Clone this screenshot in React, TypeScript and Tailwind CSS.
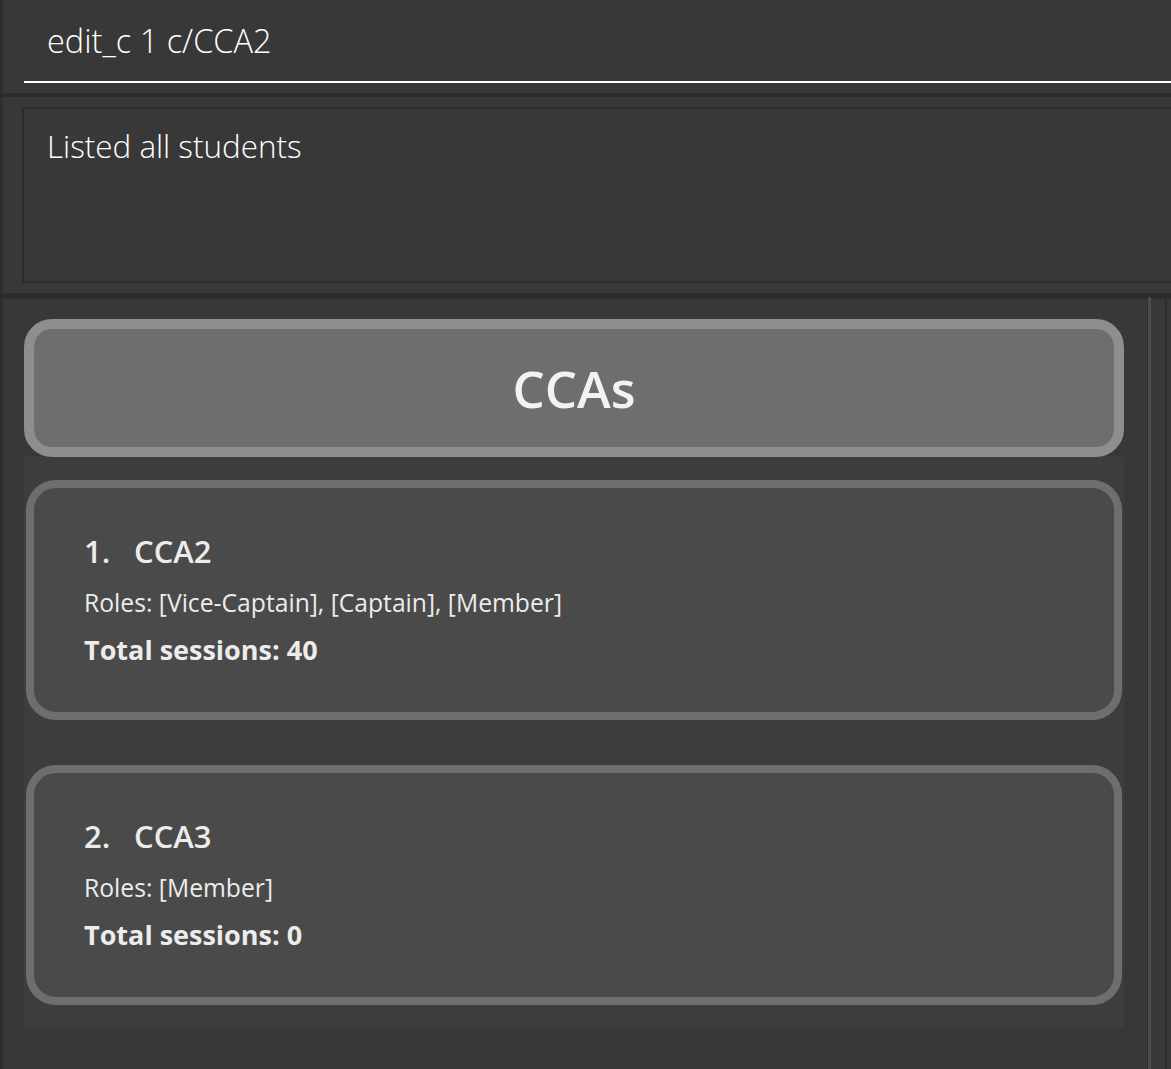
import React from "react";

const font = { fontFamily: '"Open Sans", "Noto Sans", sans-serif' };

function Card({ idx, name, roles, sessions }: { idx: number; name: string; roles: string; sessions: number }) {
  return (
    <div className="mx-[2px] h-[240px] rounded-[30px] border-[8px] border-[#6e6e6e] bg-[#4a4a4a] pl-[50px] pt-[43px] text-[#ececec]">
      <div className="flex items-baseline text-[31px] font-semibold leading-[40px]">
        <span className="w-[50px]">{idx}.</span>
        <span>{name}</span>
      </div>
      <div className="mt-[15px] text-[24.7px] leading-[34px]">{roles}</div>
      <div className="mt-[10px] text-[27px] font-bold leading-[40px]">Total sessions: {sessions}</div>
    </div>
  );
}

export default function App() {
  return (
    <div className="flex h-[1069px] w-[1171px] flex-col overflow-hidden bg-[#383838]" style={font}>
      {/* command box */}
      <div className="h-[93px] shrink-0 border-l-[3px] border-[#2e2e2e] bg-[#383838] pl-[21px]">
        <div className="h-[83px] border-b-2 border-white pl-[23px] pt-[19px] text-[32.5px] font-light leading-[44px] text-white">
          edit_c 1 c/CCA2
        </div>
      </div>
      <div className="h-[4px] shrink-0 bg-[#2c2c2c]" />
      {/* result display */}
      <div className="h-[196px] shrink-0 border-l-[3px] border-[#2e2e2e] bg-[#383838] pb-[10px] pl-[19px] pt-[10px]">
        <div className="h-full border-2 border-r-0 border-[#2c2c2c] bg-[#383838] pl-[23px] pt-[15px] text-[31.4px] font-light leading-[44px] text-white">
          Listed all students
        </div>
      </div>
      <div className="h-[4px] shrink-0 bg-[#2c2c2c]" />
      {/* main panels */}
      <div className="flex min-h-0 flex-1 border-l-[3px] border-[#2e2e2e]">
        <div className="w-[1145px] shrink-0 border-r border-t-2 border-[#2e2e2e] bg-[#383838] pl-[21px] pt-[20px]">
          <div className="flex w-[1100px] flex-col">
            <div className="flex h-[138px] items-center justify-center rounded-[28px] border-[10px] border-[#8e8e8e] bg-[#6e6e6e]">
              <span className="text-[51px] font-semibold leading-none text-[#f2f2f2]">CCAs</span>
            </div>
            <div className="flex h-[571px] flex-col gap-[45px] bg-[#3c3d3f] pt-[23px]">
              <Card idx={1} name="CCA2" roles="Roles: [Vice-Captain], [Captain], [Member]" sessions={40} />
              <Card idx={2} name="CCA3" roles="Roles: [Member]" sessions={0} />
            </div>
          </div>
        </div>
        <div className="w-[3px] shrink-0 bg-[#4e4e4e]" />
        <div className="w-[14px] shrink-0 border-t-2 border-[#2e2e2e] bg-[#383838]" />
        <div className="flex-1 border-l-2 border-t-2 border-[#2e2e2e] bg-[#383838]" />
      </div>
    </div>
  );
}
